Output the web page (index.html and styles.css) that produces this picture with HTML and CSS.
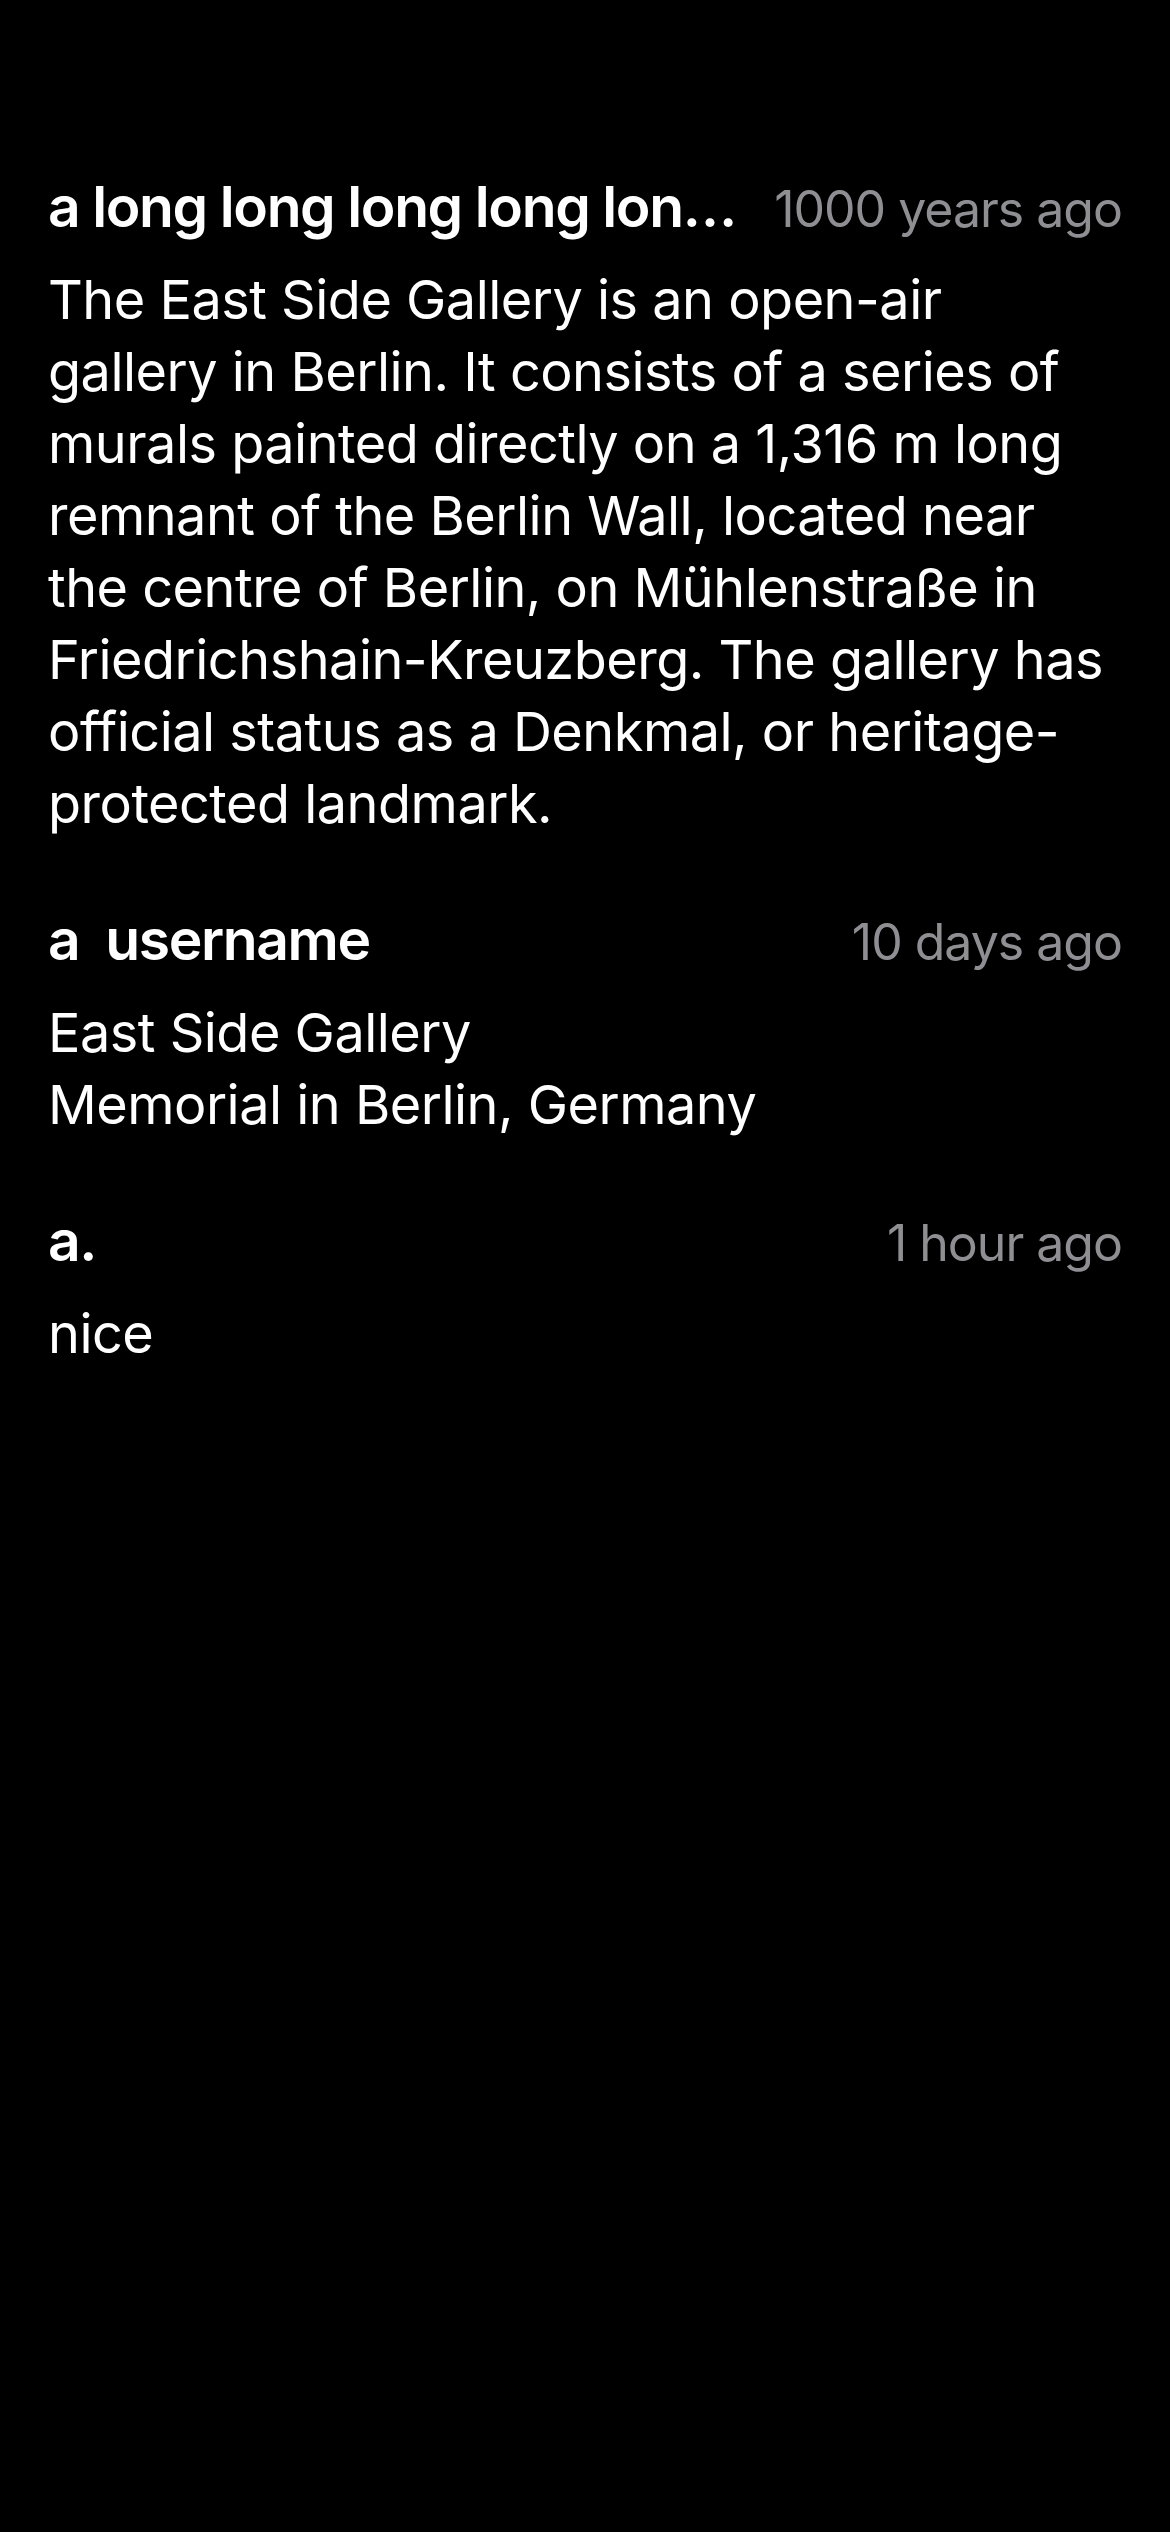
FILE: index.html
```html
<!DOCTYPE html>
<html lang="en">
<head>
<meta charset="utf-8">
<title>Comments</title>
<link rel="stylesheet" href="styles.css">
</head>
<body>
<main class="comments">
  <article class="comment">
    <header class="comment-head">
      <span class="comment-name">a long long long long long long long username</span>
      <span class="comment-time">1000 years ago</span>
    </header>
    <p class="comment-body">The East Side Gallery is an open-air gallery in Berlin. It consists of a series of murals painted directly on a 1,316 m long remnant of the Berlin Wall, located near the centre of Berlin, on Mühlenstraße in Friedrichshain-Kreuzberg. The gallery has official status as a Denkmal, or heritage-protected landmark.</p>
  </article>
  <article class="comment">
    <header class="comment-head">
      <span class="comment-name">a  username</span>
      <span class="comment-time">10 days ago</span>
    </header>
    <p class="comment-body">East Side Gallery<br>Memorial in Berlin, Germany</p>
  </article>
  <article class="comment">
    <header class="comment-head">
      <span class="comment-name">a.</span>
      <span class="comment-time">1 hour ago</span>
    </header>
    <p class="comment-body">nice</p>
  </article>
</main>
</body>
</html>
```

FILE: styles.css
```css
html, body {
  margin: 0;
  padding: 0;
  background: #000;
}

body {
  width: 1170px;
  min-height: 2532px;
  font-family: Inter, "Noto Sans", "Liberation Sans", sans-serif;
  color: #fff;
}

.comments {
  display: flex;
  flex-direction: column;
  gap: 64px;
  padding: 171px 48px 0 48px;
}

.comment-head {
  display: flex;
  align-items: baseline;
  justify-content: space-between;
  gap: 36px;
  margin-bottom: 19px;
}

.comment-name {
  min-width: 0;
  font-size: 57px;
  font-weight: 600;
  line-height: 72px;
  letter-spacing: -1.4px;
  white-space: pre;
  overflow: hidden;
  text-overflow: ellipsis;
}

.comment-time {
  flex: none;
  font-size: 50px;
  font-weight: 400;
  line-height: 72px;
  letter-spacing: -1px;
  color: #8e8e93;
}

.comment-body {
  margin: 0;
  padding-right: 8px;
  font-size: 54px;
  font-weight: 400;
  line-height: 72px;
  letter-spacing: -0.5px;
}
```
